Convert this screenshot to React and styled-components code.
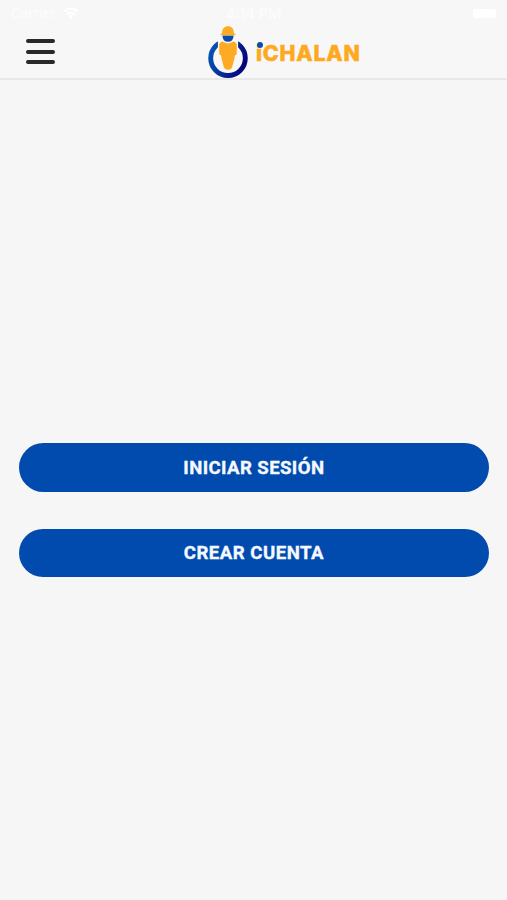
import styled, {createGlobalStyle} from "styled-components";

const GlobalStyle = createGlobalStyle`
  body {
    margin: 0;
    background: #f6f6f6;
  }
`;

const Screen = styled.div`
  display: flex;
  flex-direction: column;
  height: 900px;
  overflow: hidden;
  background: #f6f6f6;
  font-family: Roboto, "Liberation Sans", sans-serif;
`;

const TopArea = styled.header`
  box-sizing: border-box;
  height: 80px;
  background: #f7f7f7;
  border-bottom: 2px solid #e8e8e8;
`;

const StatusBar = styled.div`
  display: grid;
  grid-template-columns: 1fr auto 1fr;
  align-items: center;
  height: 26px;
  padding: 0 11px;
  color: #fcfcfc;
  font: 500 14.5px Inter, sans-serif;
`;

const Carrier = styled.div`
  display: flex;
  align-items: center;
  gap: 8px;
  font-size: 13.3px;
`;

const Battery = styled.div`
  justify-self: end;
  width: 23px;
  height: 9px;
  border-radius: 2px;
  background: #ffffff;
`;

const NavBar = styled.div`
  display: grid;
  grid-template-columns: 208px auto;
  height: 52px;
`;

const MenuButton = styled.button`
  display: flex;
  flex-direction: column;
  gap: 6.7px;
  width: 29px;
  margin: 13px 0 0 26px;
  padding: 0;
  border: 0;
  background: none;
`;

const MenuLine = styled.span`
  height: 4px;
  border-radius: 2px;
  background: #292929;
`;

const Brand = styled.div`
  display: flex;
`;

const BrandName = styled.div`
  position: relative;
  margin: 15px 0 0 8px;
  color: #fea920;
  font: 800 21.3px/25px Inter, sans-serif;
  letter-spacing: 0.8px;
  -webkit-text-stroke: 0.5px #fea920;
`;

const BrandDot = styled.span`
  position: absolute;
  top: 0.8px;
  left: 0.5px;
  width: 6.4px;
  height: 6.4px;
  border-radius: 50%;
  background: #0b4cad;
`;

const Actions = styled.main`
  display: flex;
  flex-direction: column;
  gap: 36.6px;
  padding: 363.2px 18.5px 0 19.3px;
`;

const PillButton = styled.button`
  height: 48.8px;
  padding: 0;
  border: 0;
  border-radius: 25px;
  background: #004bad;
  color: #f5f9ff;
  font: 700 18.6px/48px Roboto, sans-serif;
  letter-spacing: ${({$spacing}) => $spacing}px;
  -webkit-text-stroke: 0.35px #f5f9ff;
`;

function WifiIcon() {
    return (
        <svg width="16" height="12" viewBox="0 0 16 12" fill="none" stroke="#fff" strokeWidth="2.2">
            <path d="M1 4.5Q8 -1.5 15 4.5"/>
            <path d="M3.8 7.5Q8 4 12.2 7.5"/>
            <circle cx="8" cy="10" r="0.8"/>
        </svg>
    );
}

function BrandMark() {
    return (
        <svg width="40" height="52" viewBox="0 0 40 52">
            <defs>
                <linearGradient id="ring" x1="0" y1="0.2" x2="1" y2="0.6">
                    <stop offset="0" stopColor="#0753b5"/>
                    <stop offset="0.5" stopColor="#062f96"/>
                    <stop offset="1" stopColor="#05057b"/>
                </linearGradient>
            </defs>
            <circle cx="20" cy="32.2" r="17.3" fill="none" stroke="url(#ring)" strokeWidth="4.9"/>
            <path d="M9.9 11H30.1V27H9.9Z" fill="#f7f7f7"/>
            <path d="M14.4 9.5Q14.6 15.8 20 15.8Q25.4 15.8 25.6 9.5Z" fill="#0a4aac"/>
            <path d="M14 7.4C14 2.8 16.6 0.3 20 0.3S26 2.8 26 7.4L27.4 7.9V9.3H12.6V7.9Z" fill="#feaa22"/>
            <path d="M14.6 15.6Q20 19.2 25.4 15.6Q28.8 16 28.8 19.5V27Q28.8 29.4 26.8 29.4L26.4 33L24 41.5Q23.2 43.7 20 43.7Q16.8 43.7 16 41.5L13.6 33L13.2 29.4Q11.2 29.4 11.2 27V19.5Q11.2 16 14.6 15.6Z" fill="#feaa22"/>
        </svg>
    );
}

export default function App() {
    return (
        <Screen>
            <GlobalStyle/>
            <TopArea>
                <StatusBar>
                    <Carrier>Carrier<WifiIcon/></Carrier>
                    <span>4:14 PM</span>
                    <Battery/>
                </StatusBar>
                <NavBar>
                    <MenuButton aria-label="Menu">
                        <MenuLine/>
                        <MenuLine/>
                        <MenuLine/>
                    </MenuButton>
                    <Brand>
                        <BrandMark/>
                        <BrandName>
                            iCHALAN
                            <BrandDot/>
                        </BrandName>
                    </Brand>
                </NavBar>
            </TopArea>
            <Actions>
                <PillButton $spacing={0.4}>INICIAR SESIÓN</PillButton>
                <PillButton $spacing={0.5}>CREAR CUENTA</PillButton>
            </Actions>
        </Screen>
    );
}
